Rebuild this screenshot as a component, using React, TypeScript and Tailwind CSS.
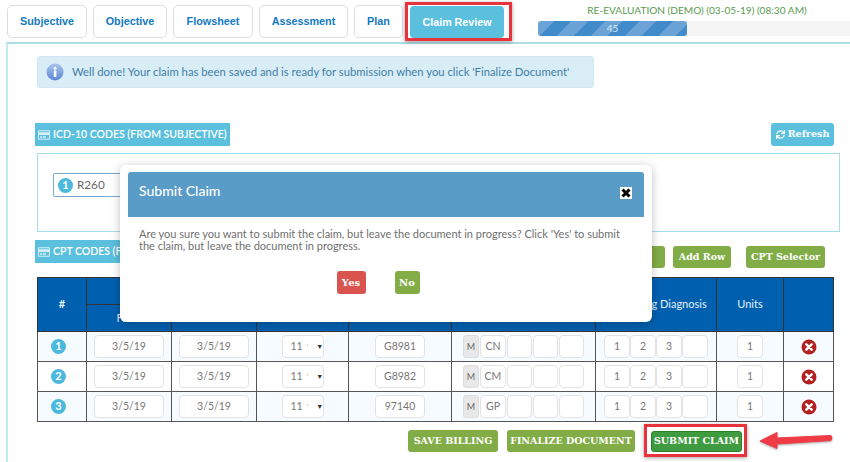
import { FaSync, FaRegCreditCard } from "react-icons/fa"

const bodyFont = "font-['Lato',sans-serif]"
const slabFont = "font-['DejaVu_Serif',serif] font-bold whitespace-nowrap"

const tabs = ["Subjective", "Objective", "Flowsheet", "Assessment", "Plan"]
const tabWidths = ["w-[80px]", "w-[74px]", "w-[80px]", "w-[89px]", "w-[49px]"]

const rows = [
    { n: 1, cpt: "G8981", mod: "CN" },
    { n: 2, cpt: "G8982", mod: "CM" },
    { n: 3, cpt: "97140", mod: "GP" },
]

const GreenButton = ({ label, className = "" }: { label: string; className?: string }) => (
    <button className={`h-[22px] rounded-[3px] bg-[#82ad46] text-[9.5px] text-white ${slabFont} ${className}`}>{label}</button>
)

const Cell = ({ value = "", className = "", children }: { value?: string; className?: string; children?: React.ReactNode }) => (
    <div className={`h-[23px] rounded-[4px] border border-[#e3e3e3] bg-white flex items-center justify-center text-[10.5px] text-[#777] ${className}`}>{value}{children}</div>
)

const SectionTitle = ({ label, className = "" }: { label: string; className?: string }) => (
    <div className={`h-[23px] bg-[#5bc0de] text-white text-[10.5px] font-semibold whitespace-nowrap flex items-center gap-[3px] pl-[3px] ${className}`}>
        <FaRegCreditCard className="text-[12px] text-[#d7eef6]" />
        {label}
    </div>
)

const DeleteIcon = () => (
    <svg width="16" height="16" viewBox="0 0 16 16">
        <circle cx="8" cy="8" r="7.5" fill="#b3201f" />
        <path d="M5.3 5.3l5.4 5.4M10.7 5.3l-5.4 5.4" stroke="#fff" strokeWidth="2.4" strokeLinecap="round" />
    </svg>
)

const InfoIcon = () => (
    <svg width="18" height="18" viewBox="0 0 18 18" className="shrink-0">
        <defs>
            <linearGradient id="info" x1="0" y1="0" x2="0" y2="1">
                <stop offset="0" stopColor="#a9c4ee" />
                <stop offset="1" stopColor="#5e86d6" />
            </linearGradient>
        </defs>
        <circle cx="9" cy="9" r="8.5" fill="url(#info)" />
        <rect x="7.8" y="7.6" width="2.6" height="6.4" rx="0.6" fill="#fff" />
        <circle cx="9.1" cy="5.2" r="1.5" fill="#fff" />
    </svg>
)

export default function App() {
    return (
        <div className={`relative w-[850px] h-[462px] overflow-hidden bg-white ${bodyFont}`}>
            <div className="h-[42px] flex pl-[7px] pt-[5px] gap-[6px]">
                {tabs.map((tab, i) => (
                    <button key={tab} className={`shrink-0 h-[33px] rounded-[5px] border border-[#ddd] text-[10.8px] font-bold text-[#1279c2] font-['Liberation_Sans',sans-serif] ${tabWidths[i]}`}>{tab}</button>
                ))}
                <div className="shrink-0 flex ml-[-4px] mt-[-3px] h-[39px] w-[107px] border-[3px] border-[#e8323c] shadow-[0_1px_4px_rgba(0,0,0,0.4)] pl-[2px] pt-[1px]">
                    <button className="h-[32px] w-[94px] rounded-[4px] bg-[#5bc0de] text-[10.7px] font-bold text-white font-['Liberation_Sans',sans-serif]">Claim Review</button>
                </div>
                <div className="ml-[20px] w-[312px] shrink-0 flex flex-col">
                    <div className="h-[16px] pl-[6px] text-center text-[10.1px] text-[#5b9a50] leading-[11px] whitespace-nowrap">RE-EVALUATION (DEMO) (03-05-19) (08:30 AM)</div>
                    <div className="h-[15px] bg-[#f5f5f5]">
                        <div className="h-full w-[149px] rounded-[3px] bg-[#428bca] bg-[repeating-linear-gradient(135deg,#6ba3d6_0,#6ba3d6_12px,#428bca_12px,#428bca_24px)] text-center text-[10px] leading-[15px] text-[#dbe9f5]">45</div>
                    </div>
                </div>
            </div>

            <div className="h-[420px] ml-[6px] border-l-2 border-t-2 border-l-[#c0ecf5] border-t-[#b0dde6] pt-[12px]">
                <div className="ml-[29px] w-[557px] h-[32px] rounded-[3px] bg-[#d9edf7] border border-[#cfe8f3] flex items-center pl-[8px] gap-[8px] text-[11.3px] text-[#3f7ea6] whitespace-nowrap">
                    <InfoIcon />
                    Well done! Your claim has been saved and is ready for submission when you click 'Finalize Document'
                </div>

                <div className="mt-[35px] ml-[27px] mr-[10px] flex justify-between">
                    <SectionTitle label="ICD-10 CODES (FROM SUBJECTIVE)" className="w-[195px]" />
                    <button className={`w-[63px] h-[23px] rounded-[3px] bg-[#5bc0de] text-white text-[9.6px] flex items-center justify-center gap-[3px] ${slabFont} mr-[6px]`}>
                        <FaSync className="text-[9px]" />
                        Refresh
                    </button>
                </div>

                <div className="mt-[7px] ml-[29px] w-[803px] h-[79px] border border-[#a5dced] pt-[19px] pl-[15px]">
                    <div className="w-[100px] h-[24px] rounded-[2px] border border-[#7ba7cf] flex items-center gap-[4px] pl-[4px] text-[11.7px] text-[#666]">
                        <span className="w-[15px] h-[15px] rounded-full bg-[#4db8dd] text-white text-[11px] font-bold flex items-center justify-center">1</span>
                        R260
                    </div>
                </div>

                <div className="mt-[8px] ml-[27px] flex items-start">
                    <SectionTitle label="CPT CODES (FROM ASSESSMENT)" className="w-[195px]" />
                    <div className="ml-[345px] mt-[6px] flex">
                        <GreenButton label="Add Quick" className="w-[90px]" />
                        <GreenButton label="Add Row" className="ml-[8px] w-[58px]" />
                        <GreenButton label="CPT Selector" className="ml-[15px] w-[79px]" />
                    </div>
                </div>

                <table className="mt-[9px] ml-[29px] w-[796px] table-fixed border-collapse border border-[#555] text-[11px]">
                    <colgroup>
                        <col className="w-[49px]" />
                        <col className="w-[85px]" />
                        <col className="w-[85px]" />
                        <col className="w-[92px]" />
                        <col className="w-[103px]" />
                        <col className="w-[144px]" />
                        <col className="w-[121px]" />
                        <col className="w-[67px]" />
                        <col className="w-[50px]" />
                    </colgroup>
                    <thead className="bg-[#0060b0] text-[#e6f0fa] font-normal">
                        <tr className="h-[27px]">
                            <th rowSpan={2} className="border border-[#333] font-bold">#</th>
                            <th colSpan={2} className="border border-[#333] font-normal">Date of Service</th>
                            <th rowSpan={2} className="border border-[#333] font-normal">POS</th>
                            <th rowSpan={2} className="border border-[#333] font-normal">CPT</th>
                            <th rowSpan={2} className="border border-[#333] font-normal">Modifiers</th>
                            <th rowSpan={2} className="border border-[#333] font-normal pl-[12px]">Pointing Diagnosis</th>
                            <th rowSpan={2} className="border border-[#333] font-normal">Units</th>
                            <th rowSpan={2} className="border border-[#333] font-normal"></th>
                        </tr>
                        <tr className="h-[27px]">
                            <th className="border border-[#333] font-normal">From</th>
                            <th className="border border-[#333] font-normal">To</th>
                        </tr>
                    </thead>
                    <tbody>
                        {rows.map((row) => (
                            <tr key={row.n} className={`h-[30px] ${row.n === 2 ? "bg-white" : "bg-[#f5fbff]"}`}>
                                <td className="border border-[#555] pr-[7px]">
                                    <span className="mx-auto w-[15px] h-[15px] rounded-full bg-[#4db8dd] text-white text-[11px] font-bold flex items-center justify-center">{row.n}</span>
                                </td>
                                <td className="border border-[#555]"><Cell value="3/5/19" className="mx-auto w-[70px] text-[9px]" /></td>
                                <td className="border border-[#555]"><Cell value="3/5/19" className="mx-auto w-[70px] text-[9px]" /></td>
                                <td className="border border-[#555]">
                                    <Cell className="mx-auto w-[42px] justify-start pl-[8px]">
                                        <span>11</span>
                                        <span className="ml-[4px] text-[8px] text-[#e8a868]">'</span>
                                        <span className="ml-[8px] text-[7px] text-[#333]">▼</span>
                                    </Cell>
                                </td>
                                <td className="border border-[#555]"><Cell value={row.cpt} className="mx-auto w-[50px]" /></td>
                                <td className="border border-[#555]">
                                    <div className="flex justify-center gap-[1px]">
                                        <div className="w-[16px] h-[23px] rounded-[3px] bg-[#e8e8e8] border border-[#ddd] flex items-center justify-center text-[9px] text-[#666]">M</div>
                                        <Cell value={row.mod} className="w-[26px]" />
                                        <Cell className="w-[25px]" />
                                        <Cell className="w-[25px]" />
                                        <Cell className="w-[25px]" />
                                    </div>
                                </td>
                                <td className="border border-[#555]">
                                    <div className="flex justify-center">
                                        <Cell value="1" className="w-[26px]" />
                                        <Cell value="2" className="w-[26px]" />
                                        <Cell value="3" className="w-[26px]" />
                                        <Cell className="w-[26px]" />
                                    </div>
                                </td>
                                <td className="border border-[#555]"><Cell value="1" className="mx-auto w-[26px]" /></td>
                                <td className="border border-[#555]"><div className="flex justify-center"><DeleteIcon /></div></td>
                            </tr>
                        ))}
                    </tbody>
                </table>

                <div className="mt-[8px] ml-[400px] flex items-start">
                    <GreenButton label="SAVE BILLING" className="w-[90px]" />
                    <GreenButton label="FINALIZE DOCUMENT" className="ml-[9px] w-[128px]" />
                    <div className="flex ml-[9px] mt-[-6px] w-[103px] h-[33px] border-[3px] border-[#e8323c] shadow-[0_1px_4px_rgba(0,0,0,0.35)] pl-[4px] pt-[4px]">
                        <button className={`h-[21px] w-[91px] rounded-[3px] bg-[#3f9b3f] border border-[#2f7d2f] text-[9.5px] text-white ${slabFont}`}>SUBMIT CLAIM</button>
                    </div>
                </div>
            </div>

            <svg className="absolute left-[758px] top-[428px] drop-shadow-[0_1px_1px_rgba(0,0,0,0.35)]" width="80" height="24" viewBox="0 0 80 24">
                <path d="M73 7.5 Q75 10 73 12.5 L19 16 L19 20.5 L2 13 L19 4.5 L19 10 Z" fill="#ef3b45" stroke="#ef3b45" strokeWidth="1" strokeLinejoin="round" />
            </svg>

            <div className="absolute left-[120px] top-[165px] w-[532px] h-[157px] rounded-[6px] bg-white shadow-[0_2px_10px_rgba(0,0,0,0.25)] pt-[7px] px-[8px]">
                <div className="h-[45px] rounded-t-[3px] bg-[#5a9cc8] flex justify-between pl-[11px] pr-[12px] pt-[8px] text-[14px] font-medium text-white">
                    Submit Claim
                    <div className="mt-[7px] w-[12px] h-[12px] bg-white flex items-center justify-center">
                        <svg width="10" height="10" viewBox="0 0 10 10">
                            <path d="M1.5 1.5l7 7M8.5 1.5l-7 7" stroke="#000" strokeWidth="3" />
                        </svg>
                    </div>
                </div>
                <p className="mt-[11px] px-[11px] text-[11px] leading-[12px] text-[#6f6f6f] whitespace-nowrap">
                    Are you sure you want to submit the claim, but leave the document in progress? Click 'Yes' to submit<br />the claim, but leave the document in progress.
                </p>
                <div className="mt-[19px] flex justify-center gap-[29px] pr-[16px]">
                    <button className={`w-[29px] h-[23px] rounded-[3px] bg-[#d9534f] text-white text-[10px] ${slabFont}`}>Yes</button>
                    <button className={`w-[25px] h-[23px] rounded-[3px] bg-[#82ad46] text-white text-[10px] ${slabFont}`}>No</button>
                </div>
            </div>
        </div>
    )
}
